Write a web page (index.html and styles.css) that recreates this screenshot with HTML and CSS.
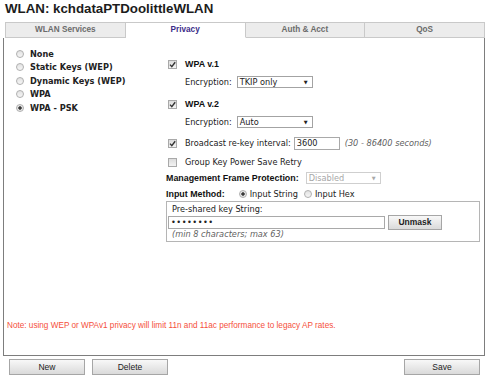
FILE: index.html
```html
<!DOCTYPE html>
<html lang="en">
<head>
    <meta charset="UTF-8">
    <title>WLAN Privacy</title>
    <link rel="stylesheet" href="styles.css">
</head>
<body>
    <h1 class="title">WLAN: kchdataPTDoolittleWLAN</h1>

    <div class="tabs">
        <div class="tab">WLAN Services</div>
        <div class="tab active">Privacy</div>
        <div class="tab">Auth &amp; Acct</div>
        <div class="tab">QoS</div>
    </div>

    <div class="panel">
        <div class="panel-body">
            <ul class="modes">
                <li><span class="radio"></span>None</li>
                <li><span class="radio"></span>Static Keys (WEP)</li>
                <li><span class="radio"></span>Dynamic Keys (WEP)</li>
                <li><span class="radio"></span>WPA</li>
                <li><span class="radio on"></span>WPA - PSK</li>
            </ul>

            <div class="settings">
                <div class="row first">
                    <span class="check"><svg viewBox="0 0 7 7"><polyline points="1,3.6 2.8,5.6 6.2,1.2"/></svg></span>
                    <b>WPA v.1</b>
                </div>
                <div class="row sub">
                    <span>Encryption:</span>
                    <span class="select"><span>TKIP only</span><span class="arrow">&#9660;</span></span>
                </div>

                <div class="row gap-lg">
                    <span class="check"><svg viewBox="0 0 7 7"><polyline points="1,3.6 2.8,5.6 6.2,1.2"/></svg></span>
                    <b>WPA v.2</b>
                </div>
                <div class="row sub">
                    <span>Encryption:</span>
                    <span class="select"><span>Auto</span><span class="arrow">&#9660;</span></span>
                </div>

                <div class="row rekey">
                    <span class="check"><svg viewBox="0 0 7 7"><polyline points="1,3.6 2.8,5.6 6.2,1.2"/></svg></span>
                    <span>Broadcast re-key interval:</span>
                    <input class="text-input interval" type="text" value="3600">
                    <i class="hint">(30 - 86400 seconds)</i>
                </div>

                <div class="row group">
                    <span class="check off"></span>
                    <span>Group Key Power Save Retry</span>
                </div>

                <div class="row mgmt">
                    <b>Management Frame Protection:</b>
                    <span class="select disabled"><span>Disabled</span><span class="arrow">&#9660;</span></span>
                </div>

                <div class="row method">
                    <b>Input Method:</b>
                    <span class="radio on method-first"></span><span>Input String</span>
                    <span class="radio method-second"></span><span>Input Hex</span>
                </div>

                <div class="psk">
                    <div class="psk-label">Pre-shared key String:</div>
                    <div class="psk-row">
                        <input class="text-input key" type="password" value="password">
                        <button class="btn unmask">Unmask</button>
                    </div>
                    <i class="psk-hint">(min 8 characters; max 63)</i>
                </div>
            </div>
        </div>

        <p class="note">Note: using WEP or WPAv1 privacy will limit 11n and 11ac performance to legacy AP rates.</p>
    </div>

    <div class="actions">
        <button class="btn">New</button>
        <button class="btn">Delete</button>
        <button class="btn save">Save</button>
    </div>
</body>
</html>
```

FILE: styles.css
```css
body {
    margin: 0;
    width: 490px;
    font-family: "DejaVu Sans", Verdana, sans-serif;
    font-size: 8.2px;
    color: #222;
    background-color: #fff;
}

.title {
    margin: 0;
    padding: 1px 5px 5px;
    font: bold 13.3px/16px "Liberation Sans", Arial, sans-serif;
    color: #1c1c1c;
}

/* tab strip */
.tabs {
    display: flex;
    margin: 0 5px;
}

.tab {
    flex: 1;
    height: 14px;
    border: 1px solid #c9c9c9;
    border-left: none;
    background-color: #ececec;
    text-align: center;
    font: bold 8.2px/14px "Liberation Sans", Arial, sans-serif;
    color: #6b6b6b;
}

.tab:first-child {
    border-left: 1px solid #c9c9c9;
}

.tab.active {
    background-color: #fff;
    border-bottom-color: #fff;
    color: #3b2c88;
}

/* main panel */
.panel {
    display: flex;
    flex-direction: column;
    box-sizing: border-box;
    height: 318px;
    margin: 0 5px 0 3px;
    border: 1px solid #7d7d7d;
    border-top: none;
}

.panel-body {
    display: flex;
    padding-top: 9px;
}

.modes {
    list-style: none;
    box-sizing: border-box;
    width: 162px;
    margin: 0;
    padding: 0 0 0 12px;
}

.modes li {
    display: flex;
    align-items: center;
    height: 13.5px;
    font-weight: bold;
}

.radio {
    display: inline-block;
    flex-shrink: 0;
    box-sizing: border-box;
    width: 8px;
    height: 8px;
    margin-right: 6px;
    border: 1px solid #b0b0b0;
    border-radius: 50%;
    background: linear-gradient(#e2e2e2, #f6f6f6);
}

.radio.on {
    background: radial-gradient(circle, #3a3a3a 0 1.4px, #e6e6e6 2px);
}

.settings {
    width: 314px;
    padding-top: 10px;
}

.row {
    display: flex;
    align-items: center;
    height: 14px;
    white-space: nowrap;
}

.row b {
    font: bold 8.9px "Liberation Sans", Arial, sans-serif;
    color: #111;
}

.row.sub {
    margin-top: 4px;
    padding-left: 19px;
}

.row.gap-lg {
    margin-top: 8px;
}

.row.rekey {
    margin-top: 7px;
}

.row.group {
    margin-top: 5px;
}

.row.mgmt {
    margin-top: 2px;
}

.row.method {
    margin-top: 2px;
    height: 13px;
}

.check {
    display: inline-flex;
    flex-shrink: 0;
    align-items: center;
    justify-content: center;
    box-sizing: border-box;
    width: 9px;
    height: 9px;
    margin: 0 8px 0 2px;
    border: 1px solid #a9a9a9;
    background: linear-gradient(#dcdcdc, #f3f3f3);
}

.check svg {
    width: 7px;
    height: 7px;
}

.check polyline {
    fill: none;
    stroke: #333;
    stroke-width: 1.4;
}

.select {
    display: inline-flex;
    align-items: center;
    justify-content: space-between;
    box-sizing: border-box;
    width: 76px;
    height: 12px;
    margin-left: 5px;
    padding: 0 4px 0 2px;
    border: 1px solid #a3a3a3;
    background-color: #fff;
}

.select .arrow {
    font-size: 5px;
}

.select.disabled {
    width: 75px;
    margin-left: 7px;
    border-color: #cfcfcf;
    color: #a8a8a8;
}

.text-input {
    box-sizing: border-box;
    height: 13px;
    margin: 0;
    padding: 0 2px;
    border: 1px solid #a9a9a9;
    font-family: inherit;
    font-size: 8.2px;
    color: #222;
    outline: none;
}

.interval {
    width: 46px;
    margin-left: 3px;
}

.hint,
.psk-hint {
    color: #5f5f5f;
}

.hint {
    margin-left: 5px;
}

.method-first {
    margin: 0 3px 0 14px;
}

.method-second {
    margin: 0 3px 0 6px;
}

.psk {
    margin-top: 1px;
    padding: 2px 0 1px 1px;
    border: 1px solid #b5b5b5;
}

.psk-label,
.psk-hint {
    display: block;
    padding-left: 4px;
    line-height: 11px;
}

.psk-row {
    display: flex;
    align-items: center;
    height: 14px;
}

.key {
    width: 217px;
    letter-spacing: 0.5px;
}

.btn {
    box-sizing: border-box;
    width: 76px;
    height: 16px;
    padding: 0;
    border: 1px solid #a6a6a6;
    background: linear-gradient(#f8f8f8, #dadada);
    font: 8.5px "Liberation Sans", Arial, sans-serif;
    color: #222;
}

.btn.unmask {
    width: 54px;
    height: 15px;
    margin-left: 3px;
    font-weight: bold;
}

.note {
    margin: auto 0 0;
    padding: 0 0 23px 3px;
    font: 8.2px/12px "Liberation Sans", Arial, sans-serif;
    color: #f5503c;
}

/* bottom buttons */
.actions {
    display: flex;
    gap: 7px;
    padding: 3px 10px 0 9px;
}

.actions .save {
    margin-left: auto;
}
```
